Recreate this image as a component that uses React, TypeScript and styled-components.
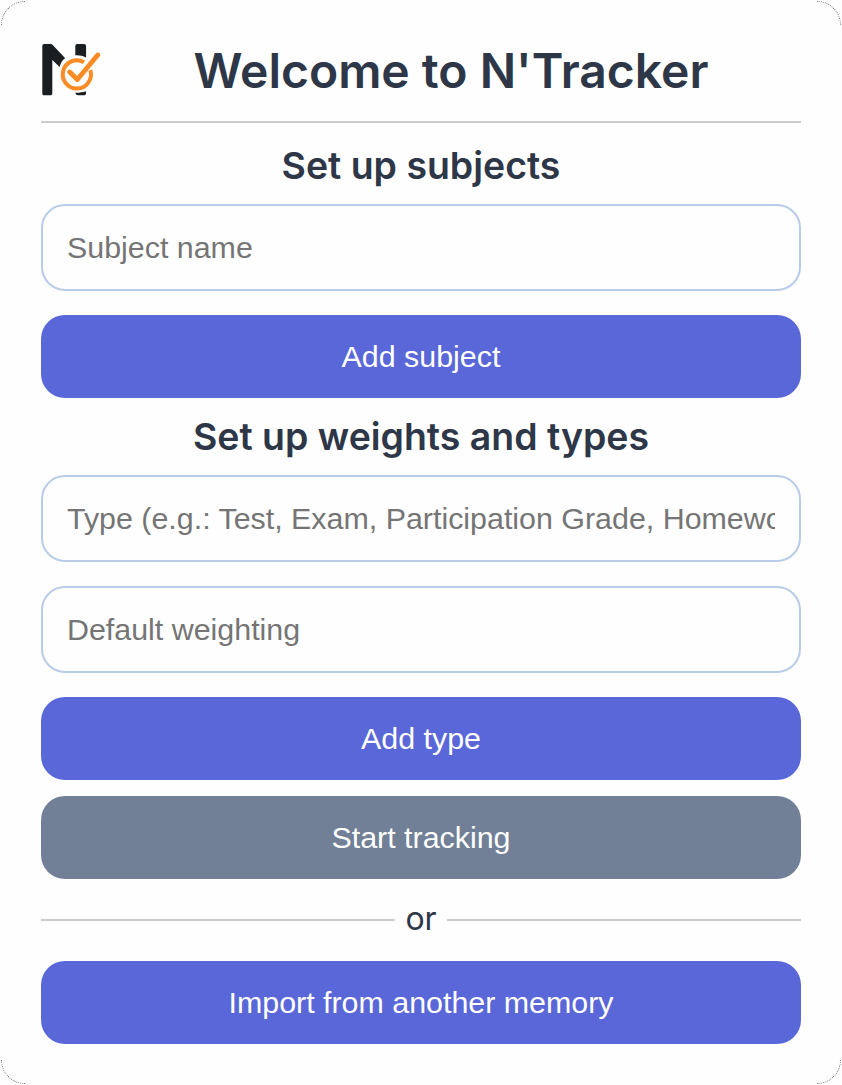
import React from "react";
import styled, { createGlobalStyle } from "styled-components";

const GlobalStyle = createGlobalStyle`
  *, *::before, *::after { box-sizing: border-box; }
  html, body { margin: 0; background: #fff; overflow: hidden; }
  h1, h2 { margin: 0; font-weight: 600; }
`;

const Card = styled.main`
  position: relative;
  display: flex;
  flex-direction: column;
  width: 842px;
  height: 1085px;
  padding: 40px 41px 41px;
  background: #fefefe;
  color: #2d3748;
  font-family: Inter, sans-serif;
`;

const Corner = styled.span<{ $v: "top" | "bottom"; $h: "left" | "right" }>`
  position: absolute;
  ${(p) => p.$v}: 1px;
  ${(p) => p.$h}: 1px;
  width: 24px;
  height: 24px;
  border-${(p) => p.$v}: 1px dotted #75787c;
  border-${(p) => p.$h}: 1px dotted #75787c;
  border-${(p) => p.$v}-${(p) => p.$h}-radius: 24px;
`;

const Header = styled.header`
  display: flex;
  align-items: flex-start;
  height: 83px;
  padding-bottom: 20px;
  border-bottom: 2px solid #cbcccd;
`;

const Logo = styled.svg`
  flex: none;
  width: 60px;
  height: 60px;
`;

const Title = styled.h1`
  flex: 1;
  text-align: center;
  font-size: 48px;
  line-height: 61px;
`;

const SectionTitle = styled.h2`
  height: 81px;
  padding-top: 20px;
  text-align: center;
  font-size: 37.44px;
  line-height: 45px;
`;

const WeightsTitle = styled(SectionTitle)`
  height: 77px;
  padding-top: 16px;
`;

const Fields = styled.div`
  display: flex;
  flex-direction: column;
  gap: 24px;
`;

const Input = styled.input`
  display: block;
  width: 100%;
  height: 87px;
  padding: 24px;
  border: 2px solid #b8cce8;
  border-radius: 24px;
  background: #fefefe;
  font: 30.4px "Liberation Sans", Arial, sans-serif;
  outline: none;
  &::placeholder { color: #757575; opacity: 1; }
`;

const Button = styled.button<{ $muted?: boolean }>`
  display: block;
  flex: none;
  width: 100%;
  height: 83px;
  padding: 24px;
  border: 0;
  border-radius: 24px;
  background: ${(p) => (p.$muted ? "#718096" : "#5a67d8")};
  color: #fff;
  font: 30.4px "Liberation Sans", Arial, sans-serif;
`;

const StartButton = styled(Button)`
  margin-top: 16px;
`;

const Divider = styled.div`
  display: flex;
  align-items: center;
  height: 82px;
  font-size: 32px;
  line-height: 38px;
  &::before, &::after {
    content: "";
    flex: 1;
    height: 2px;
    background: #cbcccd;
  }
`;

const DividerText = styled.span`
  width: 52px;
  padding-bottom: 2px;
  text-align: center;
`;

export default function App() {
  return (
    <>
      <GlobalStyle />
      <Card>
        <Corner $v="top" $h="left" />
        <Corner $v="top" $h="right" />
        <Corner $v="bottom" $h="left" />
        <Corner $v="bottom" $h="right" />
        <Header>
          <Logo viewBox="0 0 60 60" aria-label="N'Tracker">
            <path d="M3.200 4H9c1.300 0 2.200.4 3.200 1.600L24.200 18.200C21.300 20 19.500 23 18.700 27L11.300 20V53.300c0 1.400-.7 2-2 2H3.400c-1.400 0-2.100-.6-2.100-2V6c0-1.300.7-2 1.900-2Z" fill="#1b1e20" />
            <path d="M36.500 4h6.300c1.500 0 2.300.8 2.300 2.200v11.300c-3.300-1.700-7-2.500-10.800-2.200V6.200C34.300 4.800 35.100 4 36.500 4Z" fill="#1b1e20" />
            <path d="M34.300 52.800c4 .1 7.500-.5 10.700-1.500v2c0 1.500-.8 2-2.200 2h-5.500c-1.600 0-2.500-.7-3-2.500Z" fill="#1b1e20" />
            <path d="M43 22.300A14.100 14.100 0 1 0 49.300 30.200" fill="none" stroke="#fb8b24" strokeWidth="4" />
            <path d="M28.700 32L36.300 39.500L56.700 15" fill="none" stroke="#fb8b24" strokeWidth="4.900" strokeLinecap="round" strokeLinejoin="round" />
          </Logo>
          <Title>Welcome to N'Tracker</Title>
        </Header>
        <SectionTitle>Set up subjects</SectionTitle>
        <Fields>
          <Input placeholder="Subject name" />
          <Button>Add subject</Button>
        </Fields>
        <WeightsTitle>Set up weights and types</WeightsTitle>
        <Fields>
          <Input placeholder="Type (e.g.: Test, Exam, Participation Grade, Homework)" />
          <Input placeholder="Default weighting" />
          <Button>Add type</Button>
        </Fields>
        <StartButton $muted>Start tracking</StartButton>
        <Divider>
          <DividerText>or</DividerText>
        </Divider>
        <Button>Import from another memory</Button>
      </Card>
    </>
  );
}
